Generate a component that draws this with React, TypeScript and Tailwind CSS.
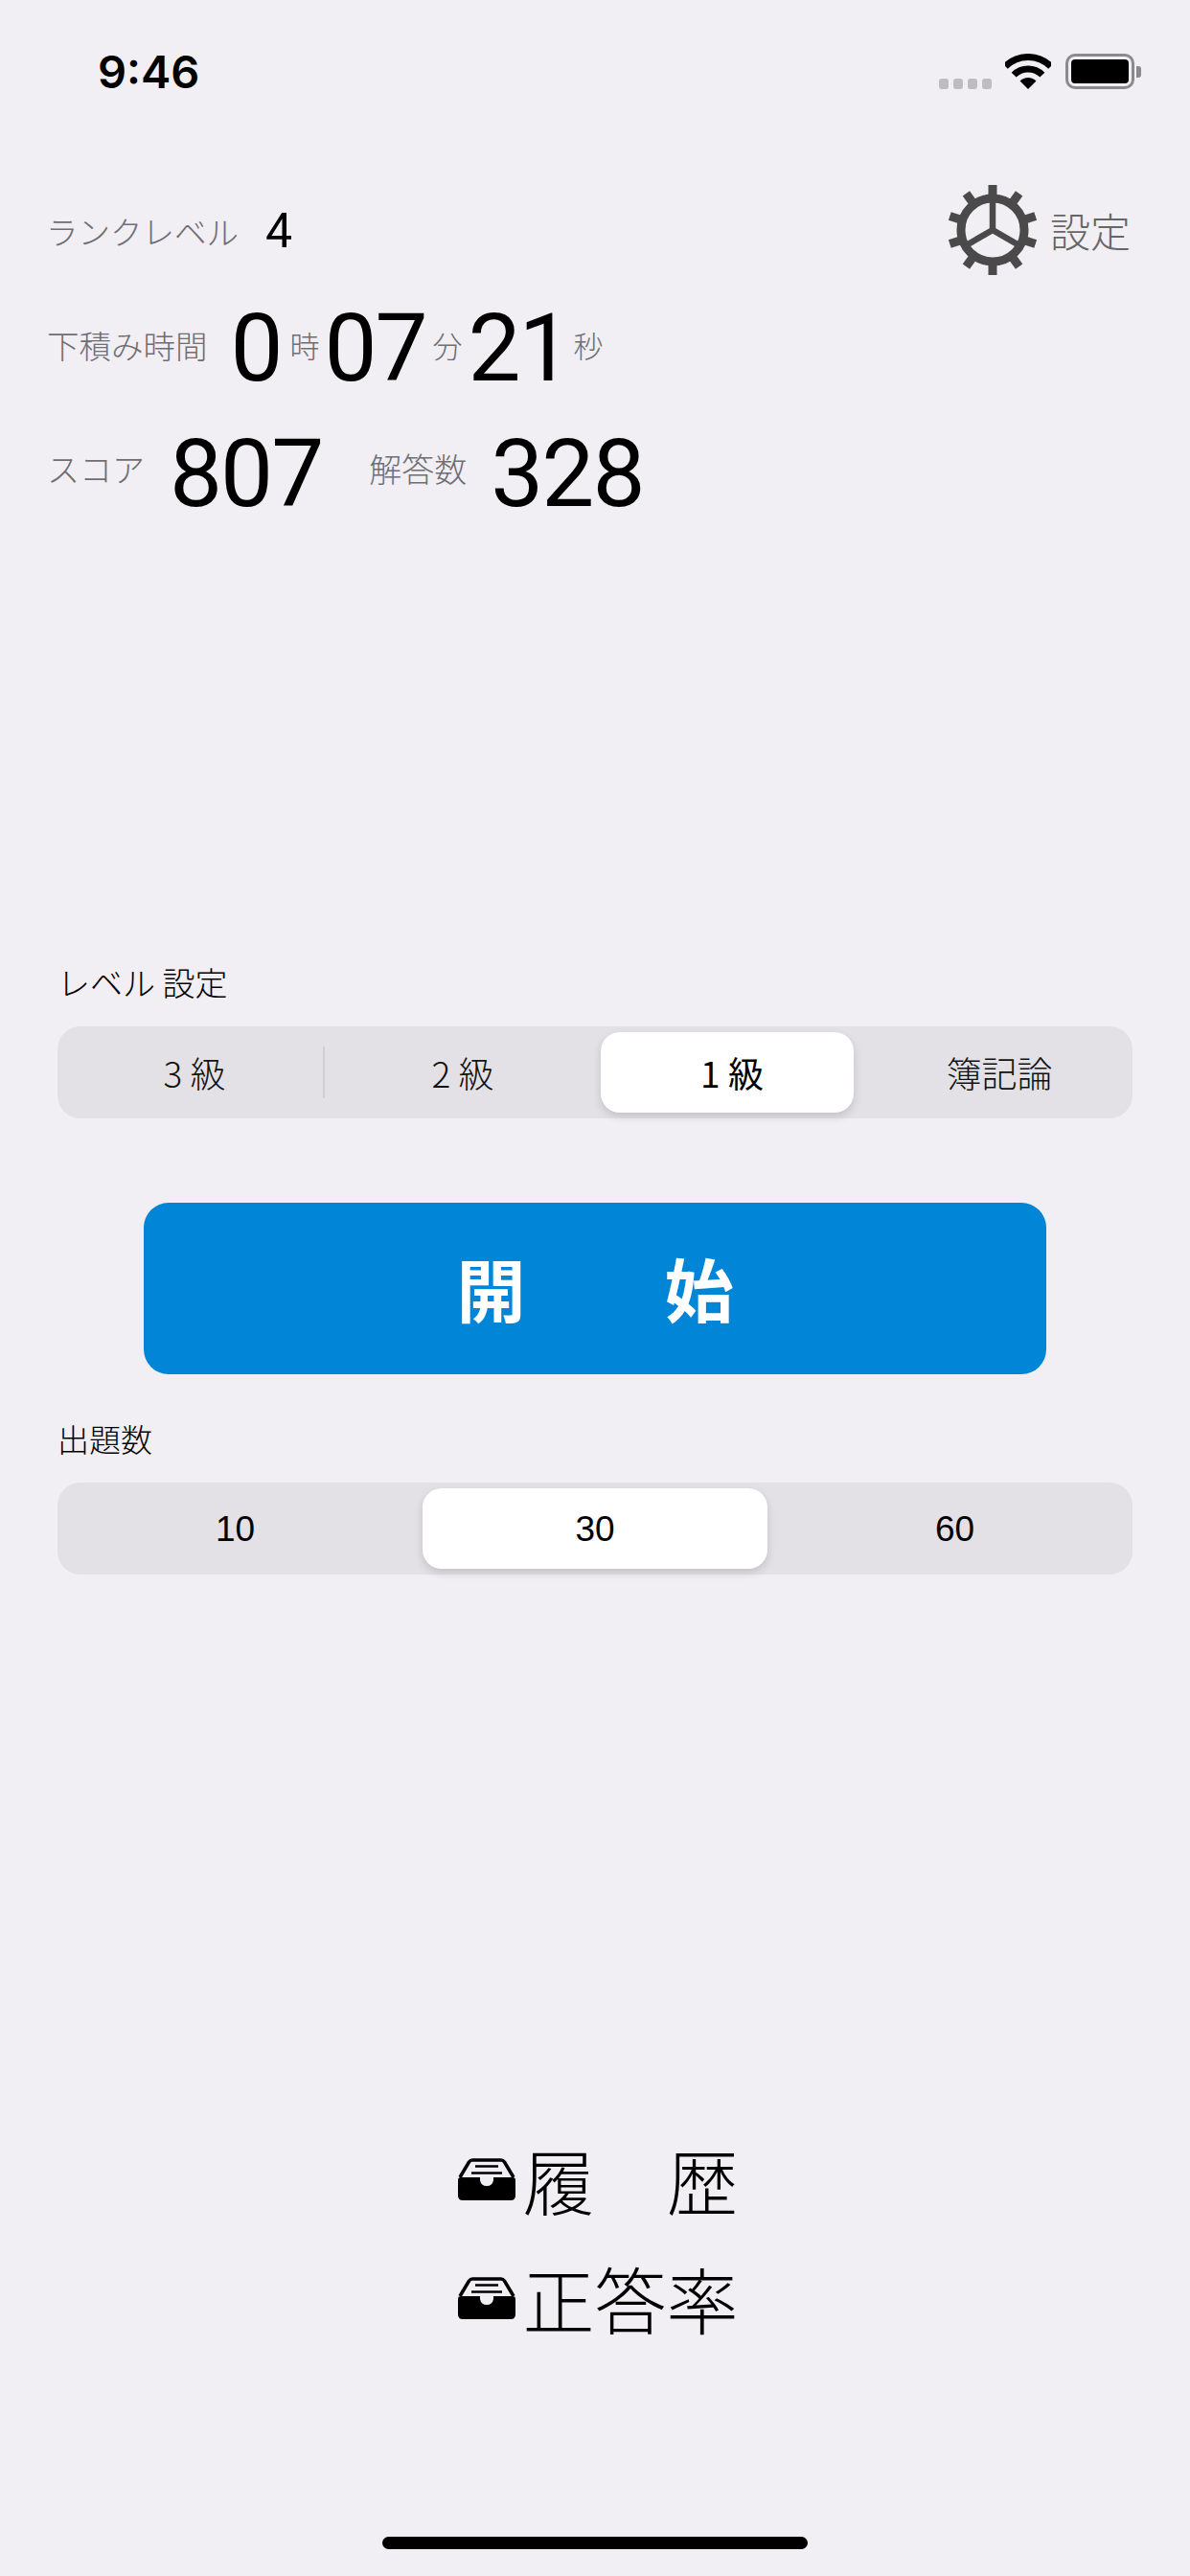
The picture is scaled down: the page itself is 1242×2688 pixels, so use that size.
import React from "react";

const jp = '"Noto Sans CJK JP", sans-serif';

function Gear() {
  const teeth = [0, 36, 72, 108, 144, 180, 216, 252, 288, 324];
  return (
    <svg width="96" height="96" viewBox="0 0 96 96" className="shrink-0">
      <g stroke="#4a4a4a" fill="none">
        <circle cx="48" cy="48" r="33" strokeWidth="9" />
        {teeth.map((a) => (
          <line key={a} x1="48" y1="14" x2="48" y2="1" strokeWidth="9" transform={`rotate(${a} 48 48)`} />
        ))}
        {[0, 120, 240].map((a) => (
          <line key={a} x1="48" y1="48" x2="48" y2="16" strokeWidth="6.5" transform={`rotate(${a} 48 48)`} />
        ))}
      </g>
    </svg>
  );
}

function Wifi() {
  return (
    <svg width="48" height="37" viewBox="0 0 48 37">
      <path d="M0.3 13.3A33.5 33.5 0 0 1 47.7 13.3" fill="none" stroke="#000" strokeWidth="7" />
      <path d="M9.15 22.15A21 21 0 0 1 38.85 22.15" fill="none" stroke="#000" strokeWidth="7" />
      <path d="M24 37L15.5 28.5A12 12 0 0 1 32.5 28.5Z" fill="#000" />
    </svg>
  );
}

function Battery() {
  return (
    <div className="flex items-center gap-[2px]">
      <div className="w-[72px] h-[37px] rounded-[10px] border-[3px] border-[#8a8a8e] p-[3px]">
        <div className="w-full h-full bg-black rounded-[4px]" />
      </div>
      <div className="w-[5px] h-[12px] bg-[#8a8a8e] rounded-r-[3px]" />
    </div>
  );
}

function Tray() {
  return (
    <svg width="60" height="44" viewBox="0 0 60 44" className="shrink-0">
      <path d="M15 2H45Q47 2 48.5 4L58 20" fill="none" stroke="#000" strokeWidth="3.5" />
      <path d="M15 2Q13 2 11.5 4L2 20" fill="none" stroke="#000" strokeWidth="3.5" />
      <path d="M18 8.5H42M14 15.5H46" stroke="#000" strokeWidth="2.5" fill="none" />
      <path d="M0 23Q0 20 3 20H23V23Q24 29 30 29Q36 29 37 23V20H57Q60 20 60 23V39Q60 44 55 44H5Q0 44 0 39Z" fill="#000" />
    </svg>
  );
}

const Num = ({ children, className }: { children: React.ReactNode; className: string }) => (
  <span className={`text-black leading-none font-['Roboto',sans-serif] font-[450] text-[98px] tracking-[-2px] mt-[5px] ${className}`}>{children}</span>
);

export default function App() {
  return (
    <div className="w-[1242px] h-[2688px] bg-[#f1eff4] flex flex-col overflow-hidden" style={{ fontFamily: jp }}>
      {/* status bar */}
      <div className="h-[192px] flex items-start justify-between pt-[56px] pl-[102px] pr-[51px]">
        <span className="font-['Inter',sans-serif] font-semibold text-[47px] leading-[37px] text-black">9:46</span>
        <div className="flex items-end">
          <div className="flex gap-[5px] mr-[14px]">
            {[0, 1, 2, 3].map((i) => (
              <div key={i} className="w-[10px] h-[11px] rounded-[3px] bg-[#bdbcc1]" />
            ))}
          </div>
          <Wifi />
          <div className="ml-[15px]">
            <Battery />
          </div>
        </div>
      </div>

      {/* rank row */}
      <div className="h-[96px] flex items-center justify-between pl-[48px] pr-[62px]">
        <div className="flex items-center pt-[2px]">
          <span className="text-[#6e6e73] font-light text-[33.5px] leading-none">ランクレベル</span>
          <span className="ml-[28px] text-black font-['Roboto',sans-serif] font-normal text-[50px] leading-none">4</span>
        </div>
        <div className="flex items-center gap-[12px]">
          <Gear />
          <span className="text-[#666666] font-light text-[42px] leading-none">設定</span>
        </div>
      </div>

      {/* time row */}
      <div className="mt-[33px] h-[80px] flex items-center pl-[49px] text-[33.5px]">
        <span className="text-[#6e6e73] font-light leading-none mb-[3px]">下積み時間</span>
        <Num className="ml-[24px] w-[56px]">0</Num>
        <span className="ml-[6px] text-[#6e6e73] text-[31px] leading-none font-light mb-[3px]">時</span>
        <Num className="ml-[5px] w-[108px]">07</Num>
        <span className="ml-[5px] text-[#6e6e73] text-[31px] leading-none font-light mb-[3px]">分</span>
        <Num className="ml-[6px] w-[104px]">21</Num>
        <span className="ml-[6px] text-[#6e6e73] text-[31px] leading-none font-light mb-[3px]">秒</span>
      </div>

      {/* score row */}
      <div className="mt-[51px] h-[80px] flex items-center pl-[49px] text-[34px]">
        <span className="text-[#6e6e73] font-light leading-none mb-[6px]">スコア</span>
        <Num className="ml-[26px]">807</Num>
        <span className="ml-[49px] text-[#6e6e73] leading-none font-light mb-[6px]">解答数</span>
        <Num className="ml-[25px]">328</Num>
      </div>

      {/* level */}
      <div className="mt-[473px] h-[40px] pl-[60px] text-[34px] leading-[40px] text-black font-light">レベル 設定</div>
      <div className="mt-[26px] mx-[60px] h-[96px] rounded-[24px] bg-[#e3e1e6] grid grid-cols-[280px_280px_280px_280px] pl-[3px] py-[6px] text-[37px] text-[#111] leading-none">
        <div className="relative flex items-center justify-center font-light">
          3 級
          <div className="absolute right-[4px] top-[15px] w-[2px] h-[54px] bg-[#cfced3]" />
        </div>
        <div className="flex items-center justify-center font-light">2 級</div>
        <div className="flex">
          <div className="flex-1 ml-[4px] mr-[12px] pl-[10px] bg-white rounded-[20px] shadow-[0_4px_10px_rgba(0,0,0,0.14)] flex items-center justify-center text-black font-normal">
            1 級
          </div>
        </div>
        <div className="flex items-center justify-center font-light">簿記論</div>
      </div>

      {/* start */}
      <div className="mt-[88px] mx-[150px] h-[179px] pb-[4px] rounded-[26px] bg-[#0085d7] flex items-center justify-center gap-[145px] text-white font-bold text-[72px] leading-none">
        <span>開</span>
        <span>始</span>
      </div>

      {/* count */}
      <div className="mt-[47px] h-[40px] pl-[60px] text-[33px] leading-[40px] text-black font-light">出題数</div>
      <div className="mt-[26px] mx-[60px] h-[96px] rounded-[24px] bg-[#e3e1e6] grid grid-cols-[1fr_360px_1fr] py-[6px] text-[37px] text-black leading-none font-['Liberation_Sans',sans-serif]">
        <div className="flex items-center justify-center pr-[10px]">10</div>
        <div className="bg-white rounded-[20px] shadow-[0_4px_10px_rgba(0,0,0,0.14)] flex items-center justify-center">30</div>
        <div className="flex items-center justify-center pl-[10px]">60</div>
      </div>

      {/* bottom links */}
      <div className="mt-[595px] pl-[6px] flex flex-col items-center gap-[52px] font-light text-[75px] leading-[72px] text-black">
        <div className="flex items-center gap-[8px]">
          <Tray />
          <span className="w-[225px] flex justify-between">
            <span>履</span>
            <span>歴</span>
          </span>
        </div>
        <div className="flex items-center gap-[8px]">
          <Tray />
          <span className="w-[225px]">正答率</span>
        </div>
      </div>

      {/* home indicator */}
      <div className="mt-auto mb-[28px] mx-auto w-[444px] h-[13px] rounded-full bg-black" />
    </div>
  );
}
